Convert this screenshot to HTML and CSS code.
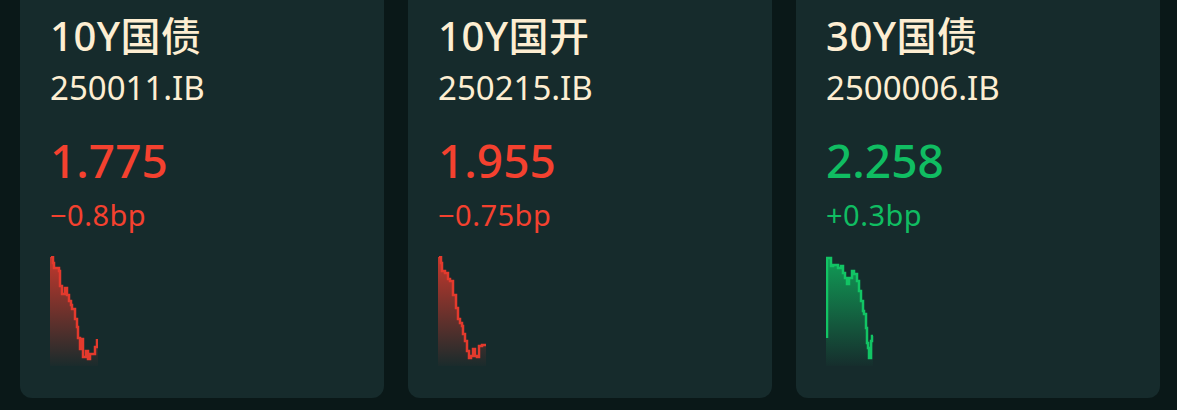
FILE: index.html
```html
<!DOCTYPE html>
<html lang="zh-CN">
<head>
    <meta charset="UTF-8">
    <meta name="viewport" content="width=device-width, initial-scale=1.0">
    <title>利率债行情</title>
    <link rel="stylesheet" href="styles.css">
</head>
<body>
    <div class="board">
        <div class="card down">
            <div class="name">10Y国债</div>
            <div class="code">250011.IB</div>
            <div class="price">1.775</div>
            <div class="change">−0.8bp</div>
            <svg class="spark" width="48" height="110" viewBox="0 0 48 110">
                <defs>
                    <linearGradient id="fill-a" x1="0" y1="0" x2="0" y2="1">
                        <stop offset="0" stop-color="#e23a2c" stop-opacity="0.85"/>
                        <stop offset="1" stop-color="#e23a2c" stop-opacity="0.02"/>
                    </linearGradient>
                </defs>
                <polygon fill="url(#fill-a)" points="0,1 3,1 3,7 4,7 4,12 9,12 9,15 10,15 10,30 12,30 12,38 15,38 15,32 17,32 17,39 19,39 19,45 21,45 21,49 22,49 22,53 25,53 25,63 27,63 27,71 28,71 28,82 30,82 30,93 32,93 32,83 33,83 33,101 36,101 36,95 38,95 38,103 40,103 40,98 45,98 45,91 47,91 47,83 48,83 48,110 0,110"/>
                <polyline class="line" points="1,1 3,1 3,7 4,7 4,12 9,12 9,15 10,15 10,30 12,30 12,38 15,38 15,32 17,32 17,39 19,39 19,45 21,45 21,49 22,49 22,53 25,53 25,63 27,63 27,71 28,71 28,82 30,82 30,93 32,93 32,83 33,83 33,101 36,101 36,95 38,95 38,103 40,103 40,98 45,98 45,91 47,91 47,83"/>
            </svg>
        </div>
        <div class="card down">
            <div class="name">10Y国开</div>
            <div class="code">250215.IB</div>
            <div class="price">1.955</div>
            <div class="change">−0.75bp</div>
            <svg class="spark" width="48" height="110" viewBox="0 0 48 110">
                <defs>
                    <linearGradient id="fill-b" x1="0" y1="0" x2="0" y2="1">
                        <stop offset="0" stop-color="#e23a2c" stop-opacity="0.85"/>
                        <stop offset="1" stop-color="#e23a2c" stop-opacity="0.02"/>
                    </linearGradient>
                </defs>
                <polygon fill="url(#fill-b)" points="0,1 3,1 3,7 4,7 4,15 7,15 7,17 10,17 10,23 12,23 12,25 15,25 15,39 18,39 18,52 20,52 20,63 22,63 22,67 24,67 24,70 25,70 25,78 27,78 27,85 29,85 29,95 31,95 31,102 33,102 33,100 35,100 35,93 37,93 37,100 39,100 39,101 41,101 41,90 44,90 44,89 48,89 48,110 0,110"/>
                <polyline class="line" points="1,1 3,1 3,7 4,7 4,15 7,15 7,17 10,17 10,23 12,23 12,25 15,25 15,39 18,39 18,52 20,52 20,63 22,63 22,67 24,67 24,70 25,70 25,78 27,78 27,85 29,85 29,95 31,95 31,102 33,102 33,100 35,100 35,93 37,93 37,100 39,100 39,101 41,101 41,90 44,90 44,89 48,89"/>
            </svg>
        </div>
        <div class="card up">
            <div class="name">30Y国债</div>
            <div class="code">2500006.IB</div>
            <div class="price">2.258</div>
            <div class="change">+0.3bp</div>
            <svg class="spark" width="48" height="110" viewBox="0 0 48 110">
                <defs>
                    <linearGradient id="fill-c" x1="0" y1="0" x2="0" y2="1">
                        <stop offset="0" stop-color="#0fb860" stop-opacity="0.8"/>
                        <stop offset="1" stop-color="#0fb860" stop-opacity="0.02"/>
                    </linearGradient>
                </defs>
                <polygon fill="url(#fill-c)" points="0,2 5,2 5,10 7,10 7,9 12,9 12,12 15,12 15,10 17,10 17,17 19,17 19,22 21,22 21,28 23,28 23,22 26,22 26,15 28,15 28,18 31,18 31,25 33,25 33,35 35,35 35,45 37,45 37,55 38,55 38,58 40,58 40,72 41,72 41,87 42,87 42,92 43,92 43,102 45,102 45,85 46,85 46,80 47,80 47,110 0,110"/>
                <polyline class="line" points="1,82 1,2 5,2 5,10 7,10 7,9 12,9 12,12 15,12 15,10 17,10 17,17 19,17 19,22 21,22 21,28 23,28 23,22 26,22 26,15 28,15 28,18 31,18 31,25 33,25 33,35 35,35 35,45 37,45 37,55 38,55 38,58 40,58 40,72 41,72 41,87 42,87 42,92 43,92 43,102 45,102 45,85 46,85 46,80 47,80"/>
            </svg>
        </div>
    </div>
</body>
</html>
```

FILE: styles.css
```css
body {
    background-color: #0a1818;
    font-family: "Noto Sans", "Noto Sans CJK SC", sans-serif;
    margin: 0;
    padding: 0;
    height: 410px;
    overflow: hidden;
}
.board {
    display: grid;
    grid-template-columns: repeat(3, 364px);
    gap: 24px;
    margin-top: -19px;
    padding-left: 20px;
}
.card {
    background-color: #162b2c;
    border-radius: 12px;
    padding: 30px 30px 32px;
    display: flex;
    flex-direction: column;
    align-items: flex-start;
}
.name {
    color: #fdeed2;
    font-size: 40px;
    font-weight: 500;
    line-height: 50px;
    letter-spacing: 0.5px;
}
.code {
    color: #fdeed2;
    font-size: 33px;
    line-height: 53px;
}
.price {
    font-size: 46px;
    font-weight: 500;
    line-height: 56px;
    margin-top: 18px;
}
.change {
    font-size: 29px;
    line-height: 40px;
    margin-top: 7px;
    letter-spacing: 0.5px;
}
.spark {
    display: block;
    margin-top: 21px;
}
.line {
    fill: none;
    stroke-width: 2.5;
    stroke-linejoin: miter;
}
.down .price, .down .change {
    color: #f4412f;
}
.down .line {
    stroke: #e33a2d;
}
.up .price, .up .change {
    color: #10bd62;
}
.up .line {
    stroke: #12c464;
}
```
